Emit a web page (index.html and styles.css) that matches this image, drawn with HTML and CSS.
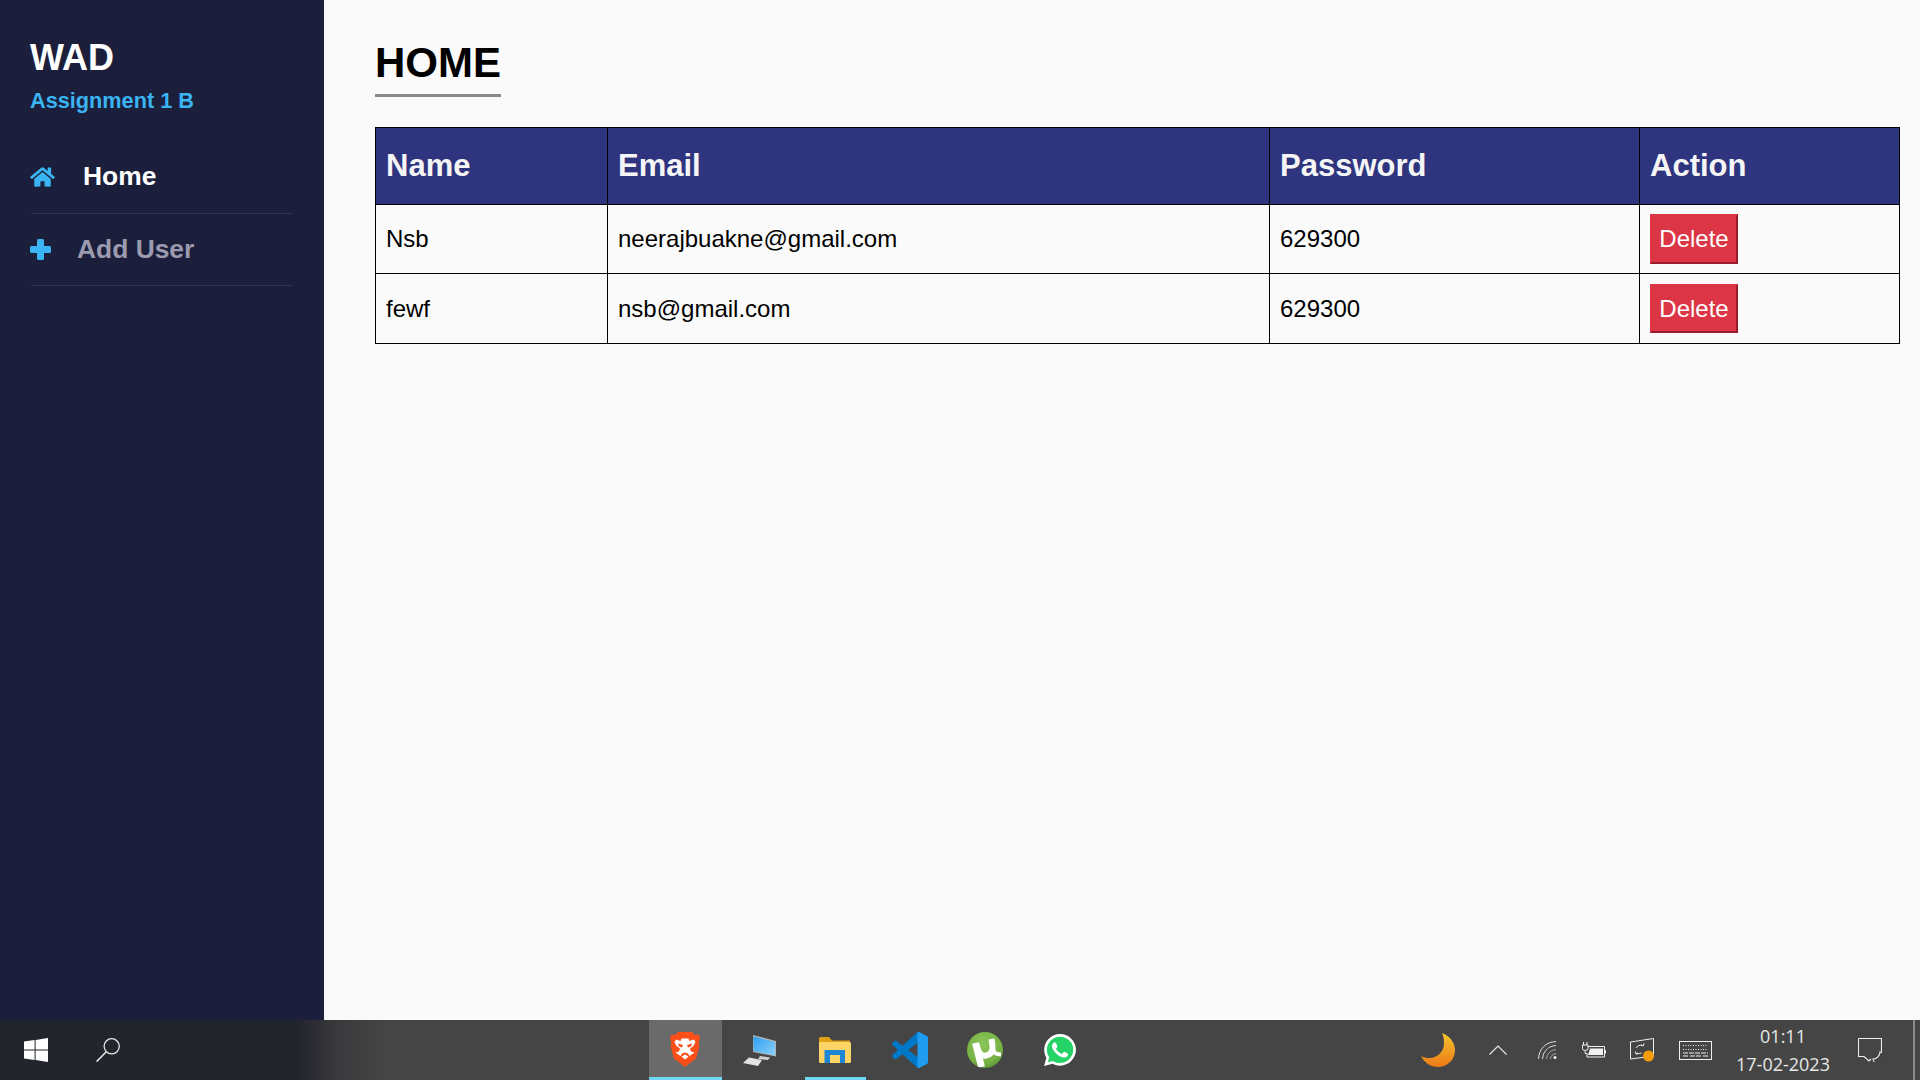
FILE: index.html
```html
<!DOCTYPE html>
<html lang="en">

<head>
  <meta charset="UTF-8">
  <title>WAD Assignment 1 B</title>
  <link rel="stylesheet" href="styles.css">
</head>

<body>
  <div class="app">
    <aside class="sidebar">
      <div class="brand">WAD</div>
      <div class="brand-sub">Assignment 1 B</div>
      <nav class="nav">
        <a class="nav-item nav-item-active">
          <svg class="nav-icon nav-icon-home" viewBox="0 0 576 512"><path d="M280.37 148.26L96 300.11V464a16 16 0 0 0 16 16l112.06-.29a16 16 0 0 0 15.92-16V368a16 16 0 0 1 16-16h64a16 16 0 0 1 16 16v95.64a16 16 0 0 0 16 16.05L464 480a16 16 0 0 0 16-16V300L295.67 148.26a12.19 12.19 0 0 0-15.3 0zM571.6 251.47L488 182.56V44.05a12 12 0 0 0-12-12h-56a12 12 0 0 0-12 12v72.61L318.47 43a48 48 0 0 0-61 0L4.34 251.47a12 12 0 0 0-1.6 16.9l25.5 31A12 12 0 0 0 45.15 301l235.22-193.74a12.19 12.19 0 0 1 15.3 0L530.9 301a12 12 0 0 0 16.9-1.6l25.5-31a12 12 0 0 0-1.7-16.93z"/></svg>
          Home
        </a>
        <a class="nav-item">
          <svg class="nav-icon nav-icon-plus" viewBox="0 0 21 21"><path d="M8.500 0H12.500Q14 0 14 1.500V7H19.500Q21 7 21 8.500V12.500Q21 14 19.500 14H14V19.500Q14 21 12.500 21H8.500Q7 21 7 19.500V14H1.500Q0 14 0 12.500V8.500Q0 7 1.500 7H7V1.500Q7 0 8.500 0z"/></svg>
          Add User
        </a>
      </nav>
    </aside>

    <main class="content">
      <h1 class="page-title">HOME</h1>
      <table class="users">
        <colgroup>
          <col class="col-name">
          <col class="col-email">
          <col class="col-password">
          <col>
        </colgroup>
        <thead>
          <tr>
            <th>Name</th>
            <th>Email</th>
            <th>Password</th>
            <th>Action</th>
          </tr>
        </thead>
        <tbody>
          <tr>
            <td>Nsb</td>
            <td>neerajbuakne@gmail.com</td>
            <td>629300</td>
            <td><button class="btn-delete">Delete</button></td>
          </tr>
          <tr>
            <td>fewf</td>
            <td>nsb@gmail.com</td>
            <td>629300</td>
            <td><button class="btn-delete">Delete</button></td>
          </tr>
        </tbody>
      </table>
    </main>
  </div>

  <footer class="taskbar">
    <div class="task-start">
      <svg class="start-logo" viewBox="0 0 24 24"><path fill="#fff" d="M0 3.6L10.6 2.1V11.5H0zM11.6 2L24 0V11.5H11.6zM0 12.5H10.6V21.9L0 20.4zM11.6 12.5H24V24L11.6 22z"/></svg>
      <svg class="start-search" viewBox="0 0 24 24"><circle cx="15.7" cy="8.3" r="7.6" fill="none" stroke="#e8e8e8" stroke-width="1.3"/><path d="M10.3 13.7L.6 23.6" fill="none" stroke="#e8e8e8" stroke-width="1.5"/></svg>
    </div>

    <div class="task-apps">
      <div class="task-app task-app-current">
        <svg class="icon-brave" viewBox="0 0 30 36">
          <path fill="#fb4f1a" d="M8 0H22L25 3 28.500 2.500 30 6 28.500 11 29.500 14 26 26.500 20 31 15 35 10 31 4 26.500 .5 14 1.500 11 0 6 1.500 2.500 5 3z"/>
          <path fill="#fff" d="M11.500 6.500H18.500L19.500 9 24 7.500 25.500 10 23.500 14 20 16.500 21 19.500 24.500 20.500 19.500 24 18 21.500 15 20.500 12 21.500 10.500 24 5.500 20.500 9 19.500 10 16.500 6.500 14 4.500 10 6 7.500 10.500 9z"/>
          <path fill="#fb4f1a" d="M13 13L8 11.500 9 14.500 12 15.500zM17 13L22 11.500 21 14.500 18 15.500z"/>
          <path fill="#fff" d="M11.500 24.500L15 22.500 18.500 24.500 15 27.500z"/>
        </svg>
      </div>
      <div class="task-app">
        <svg class="icon-pc" viewBox="0 0 33 31">
          <defs>
            <linearGradient id="screenFill" x1="0" y1="0" x2="1" y2="1">
              <stop offset="0" stop-color="#2b9ff2"/>
              <stop offset="1" stop-color="#8cd2fa"/>
            </linearGradient>
          </defs>
          <path fill="#aeb2b6" d="M10 0L33 6V21.500L10 17z"/>
          <path fill="url(#screenFill)" d="M10.500 1.500L32 7V20.500L10.500 16z"/>
          <path fill="#cfd1d3" d="M17 21L27 22.500 25 25 15 24z"/>
          <path fill="#e2e3e4" d="M6 22.500L19 25 15 31 0 28z"/>
        </svg>
      </div>
      <div class="task-app task-app-open">
        <svg class="icon-folder" viewBox="0 0 32 26">
          <path fill="#e0a117" d="M0 1.500Q0 0 1.500 0H10L13 3.500H31V8H0z"/>
          <path fill="#fbd466" d="M0 5H30.500Q32 5 32 6.500V24.500Q32 26 30.500 26H1.500Q0 26 0 24.500z"/>
          <path fill="#1f86d6" d="M5.500 13H26V26H21V18H11V26H5.500z"/>
        </svg>
      </div>
      <div class="task-app">
        <svg class="icon-code" viewBox="0 0 24 24">
          <defs>
            <clipPath id="codeRight"><rect x="17" y="0" width="7" height="24"/></clipPath>
          </defs>
          <path fill="#0078c8" d="M23.15 2.587L18.21.21a1.494 1.494 0 0 0-1.705.29l-9.46 8.63-4.12-3.128a.999.999 0 0 0-1.276.057L.327 7.261A1 1 0 0 0 .326 8.74L3.899 12 .326 15.26a1 1 0 0 0 .001 1.479L1.65 17.94a.999.999 0 0 0 1.276.057l4.12-3.128 9.46 8.63a1.492 1.492 0 0 0 1.704.29l4.942-2.377A1.5 1.5 0 0 0 24 20.06V3.939a1.5 1.5 0 0 0-.85-1.352zm-5.146 14.861L10.826 12l7.178-5.448v10.896z"/>
          <path fill="#1f9cf0" clip-path="url(#codeRight)" d="M23.15 2.587L18.21.21a1.494 1.494 0 0 0-1.705.29L16.5 23.5a1.492 1.492 0 0 0 1.704.29l4.942-2.377A1.5 1.5 0 0 0 24 20.06V3.939a1.5 1.5 0 0 0-.85-1.352z"/>
        </svg>
      </div>
      <div class="task-app">
        <svg class="icon-torrent" viewBox="0 0 36 36">
          <defs>
            <radialGradient id="torrentFill" cx=".45" cy=".35" r=".7">
              <stop offset="0" stop-color="#8cc65a"/>
              <stop offset=".75" stop-color="#74b044"/>
              <stop offset="1" stop-color="#548f30"/>
            </radialGradient>
            <clipPath id="torrentBall"><circle cx="18" cy="18" r="18"/></clipPath>
          </defs>
          <circle cx="18" cy="18" r="18" fill="url(#torrentFill)"/>
          <g fill="none" stroke="#fff" clip-path="url(#torrentBall)">
            <path stroke-width="7" d="M8.500 11L14.500 35"/>
            <path stroke-width="6" d="M9 12L11.500 19Q13.500 24.500 19 23.500 26 22.500 25.500 14L24.500 7"/>
            <path stroke-width="4" d="M26 17Q27 22.500 34 22.500"/>
          </g>
        </svg>
      </div>
      <div class="task-app">
        <svg class="icon-whatsapp" viewBox="0 0 24 24">
          <circle cx="12" cy="12" r="10.500" fill="#25d366"/>
          <path fill="#25d366" d="M2 22L4 15 9 20z"/>
          <path fill="#fff" d="M17.472 14.382c-.297-.149-1.758-.867-2.03-.967-.273-.099-.471-.148-.67.15-.197.297-.767.966-.94 1.164-.173.199-.347.223-.644.075-.297-.15-1.255-.463-2.39-1.475-.883-.788-1.48-1.761-1.653-2.059-.173-.297-.018-.458.13-.606.134-.133.298-.347.446-.52.149-.174.198-.298.298-.497.099-.198.05-.371-.025-.52-.075-.149-.669-1.612-.916-2.207-.242-.579-.487-.5-.669-.51-.173-.008-.371-.01-.57-.01-.198 0-.52.074-.792.372-.272.297-1.04 1.016-1.04 2.479 0 1.462 1.065 2.875 1.213 3.074.149.198 2.096 3.2 5.077 4.487.709.306 1.262.489 1.694.625.712.227 1.36.195 1.871.118.571-.085 1.758-.719 2.006-1.413.248-.694.248-1.289.173-1.413-.074-.124-.272-.198-.57-.347m-5.421 7.403h-.004a9.87 9.87 0 01-5.031-1.378l-.361-.214-3.741.982.998-3.648-.235-.374a9.86 9.86 0 01-1.51-5.26c.001-5.45 4.436-9.884 9.888-9.884 2.64 0 5.122 1.03 6.988 2.898a9.825 9.825 0 012.893 6.994c-.003 5.45-4.437 9.884-9.885 9.884m8.413-18.297A11.815 11.815 0 0012.05 0C5.495 0 .16 5.335.157 11.892c0 2.096.547 4.142 1.588 5.945L.057 24l6.305-1.654a11.882 11.882 0 005.683 1.448h.005c6.554 0 11.89-5.335 11.893-11.893a11.821 11.821 0 00-3.48-8.413z"/>
        </svg>
      </div>
    </div>

    <div class="tray">
      <div class="tray-item tray-moon">
        <svg class="icon-moon" viewBox="0 0 34 34">
          <defs>
            <linearGradient id="moonFill" x1="0" y1="0" x2="0" y2="1">
              <stop offset="0" stop-color="#f5c52f"/>
              <stop offset="1" stop-color="#ec7a17"/>
            </linearGradient>
          </defs>
          <path fill="url(#moonFill)" d="M21 0C29 3 34 9.500 34 17.500 34 27 26 34 17 34 9.500 34 3 29.500 0 23 2.500 24.500 5.500 25 8.500 25 16.500 25 23 18.500 23 10.500 23 6.500 22.500 3 21 0z"/>
        </svg>
      </div>
      <div class="tray-item tray-chevron">
        <svg class="icon-chevron" viewBox="0 0 18 10"><path d="M.5 9.500L9 1 17.500 9.500" fill="none" stroke="#e8e8e8" stroke-width="1.2"/></svg>
      </div>
      <div class="tray-item tray-wifi">
        <svg class="icon-wifi" viewBox="0 0 19 18">
          <g fill="none" stroke="#e0e0e0">
            <path d="M.6 18C.6 8 8 .8 18 .6"/>
            <path d="M4.600 18C4.600 10.500 10.500 4.800 18 4.600" stroke-dasharray="12 1"/>
            <path d="M8.600 18C8.600 13 13 8.800 18 8.600" stroke="#a8a8a8"/>
            <path d="M12.500 18C12.500 15 15 12.800 18 12.600" stroke="#a8a8a8"/>
          </g>
          <circle cx="17" cy="16.500" r="1.500" fill="#f0f0f0"/>
        </svg>
      </div>
      <div class="tray-item tray-battery">
        <svg class="icon-battery" viewBox="0 0 24 16">
          <path d="M1.500 0V3M5 0V3M.5 3H6V6.500Q6 8.500 3.200 8.500 .5 8.500 .5 6.500zM3.200 8.500V11.500H5" fill="none" stroke="#f0f0f0"/>
          <path d="M6 4.500H22.500V15H5V11" fill="none" stroke="#f0f0f0"/>
          <path d="M8 6.500H21V13H6z" fill="#f0f0f0"/>
          <rect x="23" y="8" width="1" height="3.500" fill="#f0f0f0"/>
        </svg>
      </div>
      <div class="tray-item tray-sync">
        <svg class="icon-sync" viewBox="0 0 24 24">
          <path d="M.5 4L23.500.5V18L.5 21z" fill="none" stroke="#f0f0f0"/>
          <path d="M6 10Q8 6.500 13 7.500M14 5.500L13.300 7.800 11 7M6 16Q10 15.500 11.500 15M5.500 13.500L6 16 8 15" fill="none" stroke="#f0f0f0"/>
          <circle cx="18.500" cy="18" r="5.500" fill="#f59c0b"/>
        </svg>
      </div>
      <div class="tray-item tray-keyboard">
        <svg class="icon-keyboard" viewBox="0 0 33 19">
          <rect x=".5" y=".5" width="32" height="18" fill="none" stroke="#f0f0f0"/>
          <path d="M4 4.500H29M4 8.500H29" fill="none" stroke="#f0f0f0" stroke-dasharray="1 1.500"/>
          <path d="M4 12H29M4 15H9M11 15H22M24 15H29" fill="none" stroke="#f0f0f0" stroke-dasharray="5 1"/>
        </svg>
      </div>
      <div class="tray-clock">
        <span>01:11</span>
        <span>17-02-2023</span>
      </div>
      <div class="tray-item tray-notify">
        <svg class="icon-notify" viewBox="0 0 24 24">
          <path d="M.5.5H23.500V15M.5.500V18.500H6L11 23 13 21" fill="none" stroke="#f0f0f0" stroke-width="1.100"/>
          <path d="M22 14A6 6 0 1 1 15 21 7 7 0 0 0 22 14z" fill="#444" stroke="#f0f0f0" stroke-width="1.100"/>
        </svg>
      </div>
      <div class="show-desktop"></div>
    </div>
  </footer>
</body>

</html>
```

FILE: styles.css
```css
html, body {
  margin: 0;
  height: 100%;
  overflow: hidden;
}

body {
  display: flex;
  flex-direction: column;
  font-family: "Liberation Sans", Arial, sans-serif;
  background: #fafafa;
  color: #000;
}

.app {
  flex: 1;
  display: flex;
  min-height: 0;
}

/* sidebar */
.sidebar {
  width: 324px;
  flex-shrink: 0;
  box-sizing: border-box;
  padding: 38px 31px 0 30px;
  background: #1b1f3b;
}

.brand {
  font-size: 36px;
  line-height: 40px;
  font-weight: 700;
  color: #fff;
}

.brand-sub {
  margin-top: 10px;
  font-size: 21.7px;
  line-height: 26px;
  font-weight: 700;
  color: #3ab4f2;
}

.nav {
  margin: 26px 0 0 1px;
}

.nav-item {
  display: flex;
  align-items: center;
  height: 71px;
  border-bottom: 1px solid #2f3350;
  font-size: 26.4px;
  font-weight: 700;
  color: #9b9aae;
}

.nav-item-active {
  height: 73px;
  color: #fff;
}

.nav-icon {
  margin-left: -1px;
  fill: #3ab4f2;
  flex-shrink: 0;
}

.nav-icon-home {
  width: 25px;
  height: 22px;
  margin-right: 28px;
}

.nav-icon-plus {
  width: 21px;
  height: 21px;
  margin-right: 26px;
}

/* main */
.content {
  flex: 1;
  min-width: 0;
  padding: 40px 20px 0 51px;
}

.page-title {
  display: inline-block;
  margin: 0 0 30px;
  padding-bottom: 8px;
  border-bottom: 3px solid #888;
  font-size: 42px;
  line-height: 46px;
  font-weight: 700;
}

.users {
  width: 100%;
  table-layout: fixed;
  border-collapse: collapse;
}

.col-name {
  width: 232px;
}

.col-email {
  width: 662px;
}

.col-password {
  width: 370px;
}

.users th, .users td {
  border: 1px solid #000;
  text-align: left;
}

.users th {
  height: 57px;
  padding: 9.5px 10px;
  background: #2e347d;
  color: #f5f5f5;
  font-size: 31px;
  font-weight: 700;
}

.users td {
  padding: 9px 10px;
  font-size: 24px;
}

.users tr:last-child td {
  padding: 10px;
}

.btn-delete {
  display: block;
  width: 88px;
  height: 50px;
  padding: 0;
  border: 2px solid;
  border-color: #dc3545 #9a1c2c #9a1c2c #dc3545;
  background: #dc3545;
  color: #fff;
  font-family: inherit;
  font-size: 24px;
}

.users tr:last-child .btn-delete {
  height: 49px;
}

/* taskbar */
.taskbar {
  height: 60px;
  flex-shrink: 0;
  display: flex;
  align-items: stretch;
  background: linear-gradient(90deg, #23252d 0, #23252d 300px, #39393c 335px, #454545 385px);
}

.task-start {
  width: 647px;
  display: flex;
  align-items: center;
  box-sizing: border-box;
  padding-left: 24px;
}

.start-logo {
  width: 24px;
  height: 24px;
  margin-right: 48px;
}

.start-search {
  width: 24px;
  height: 24px;
}

.task-apps {
  display: flex;
}

.task-app {
  position: relative;
  width: 75px;
  display: flex;
  align-items: center;
  justify-content: center;
}

.task-app-current {
  background: linear-gradient(#6a6a6a, #6a6a6a) 2px 0 / 73px 100% no-repeat;
}

.task-app-current::after, .task-app-open::after {
  content: "";
  position: absolute;
  left: 2px;
  right: 0;
  bottom: 0;
  height: 3px;
  background: #6fd8f5;
}

.task-app-open::after {
  left: 8px;
  right: 6px;
}

.icon-brave {
  width: 30px;
  height: 36px;
}

.icon-pc {
  width: 33px;
  height: 31px;
}

.icon-folder {
  width: 32px;
  height: 26px;
}

.icon-code {
  width: 36px;
  height: 36px;
}

.icon-torrent {
  width: 36px;
  height: 36px;
}

.icon-whatsapp {
  width: 32px;
  height: 32px;
}

.tray {
  margin-left: auto;
  display: flex;
  align-items: stretch;
  padding-right: 5px;
}

.tray-item {
  display: flex;
  align-items: center;
  justify-content: center;
}

.tray-moon {
  width: 60px;
}

.tray-chevron {
  width: 60px;
}

.tray-wifi {
  width: 38px;
}

.tray-battery {
  width: 56px;
}

.tray-sync {
  width: 40px;
}

.tray-keyboard {
  width: 66px;
}

.tray-notify {
  width: 64px;
}

.icon-moon {
  width: 34px;
  height: 34px;
}

.icon-chevron {
  width: 18px;
  height: 10px;
}

.icon-wifi {
  width: 19px;
  height: 18px;
}

.icon-battery {
  width: 24px;
  height: 16px;
}

.icon-sync {
  width: 24px;
  height: 24px;
}

.icon-keyboard {
  width: 33px;
  height: 19px;
}

.icon-notify {
  width: 24px;
  height: 24px;
}

.tray-clock {
  width: 110px;
  display: flex;
  flex-direction: column;
  align-items: center;
  justify-content: center;
  font-family: "Open Sans", sans-serif;
  font-size: 18px;
  line-height: 28px;
  color: #e8e8e8;
}

.show-desktop {
  width: 2px;
  margin-left: 11px;
  background: #8a8a8a;
}
```
